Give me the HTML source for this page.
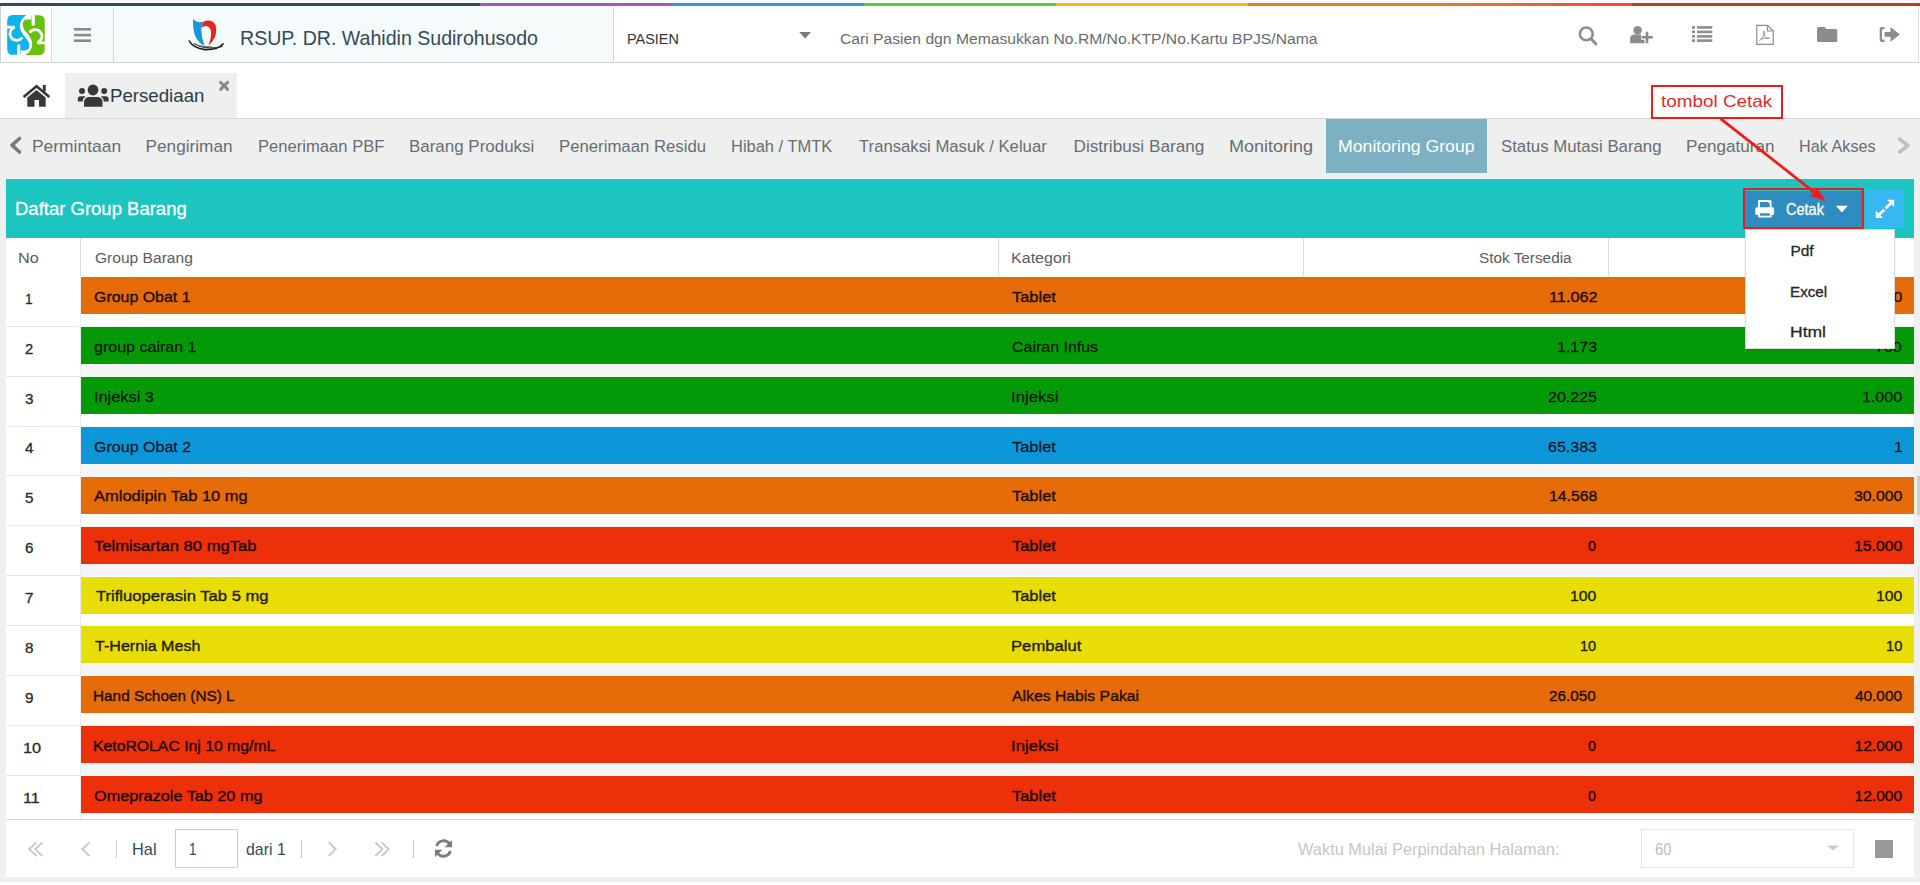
<!DOCTYPE html>
<html><head><meta charset="utf-8"><title>Persediaan - Monitoring Group</title>
<style>html,body{margin:0;padding:0}
body{width:1920px;height:885px;position:relative;overflow:hidden;background:#eef0f0;font-family:'Liberation Sans', sans-serif}
.r{position:absolute}
.tx{position:absolute;white-space:nowrap;transform-origin:0 0}
.ic{position:absolute;left:0;top:0;pointer-events:none}</style></head>
<body>
<div class="r" style="left:0px;top:0px;width:1920px;height:3px;background:#f7f9fa;"></div>
<div class="r" style="left:0;top:3px;width:1920px;height:3px;background:linear-gradient(to right,#34495e 0,#34495e 25%,#9b59b6 25%,#9b59b6 35%,#3498db 35%,#3498db 45%,#62cb31 45%,#62cb31 55%,#ffb606 55%,#ffb606 65%,#e67e22 65%,#e67e22 75%,#e74c3c 85%,#c0392b 85%,#c0392b 100%)"></div>
<div class="r" style="left:0px;top:6px;width:1920px;height:56px;background:#ffffff;"></div>
<div class="r" style="left:1px;top:6px;width:612px;height:56px;background:#f5fafa;"></div>
<div class="r" style="left:1px;top:6px;width:50px;height:56px;background:#ffffff;"></div>
<div class="r" style="left:0px;top:6px;width:1px;height:56px;background:#d0d2d4;"></div>
<div class="r" style="left:51px;top:8px;width:1px;height:54px;background:#d4d8d8;"></div>
<div class="r" style="left:113px;top:8px;width:1px;height:54px;background:#d4d8d8;"></div>
<div class="r" style="left:613px;top:8px;width:1px;height:54px;background:#d0d4d4;"></div>
<div class="r" style="left:1918px;top:6px;width:1px;height:56px;background:#e0e0e0;"></div>
<div class="r" style="left:0px;top:62px;width:1920px;height:1px;background:#cfd2d2;"></div>
<div class="r" style="left:0px;top:63px;width:1920px;height:55px;background:#ffffff;"></div>
<div class="r" style="left:65px;top:73px;width:172px;height:45px;background:#eef0f0;"></div>
<div class="r" style="left:0px;top:118px;width:1920px;height:1px;background:#d4d6d6;"></div>
<div class="r" style="left:0px;top:119px;width:1920px;height:766px;background:#eef0f0;"></div>
<div class="r" style="left:1326px;top:119px;width:161px;height:54px;background:#7db0c1;"></div>
<div class="r" style="left:6px;top:179px;width:1908px;height:59px;background:#1cc5c0;"></div>
<div class="r" style="left:6px;top:238px;width:1908px;height:38px;background:#ffffff;"></div>
<div class="r" style="left:80px;top:238px;width:1px;height:38px;background:#dcdcdc;"></div>
<div class="r" style="left:998px;top:238px;width:1px;height:38px;background:#dcdcdc;"></div>
<div class="r" style="left:1303px;top:238px;width:1px;height:38px;background:#dcdcdc;"></div>
<div class="r" style="left:1608px;top:238px;width:1px;height:38px;background:#dcdcdc;"></div>
<div class="r" style="left:6px;top:276.10px;width:75px;height:49.91px;background:#ffffff"></div>
<div class="r" style="left:81px;top:276.10px;width:1833px;height:49.91px;background:#ffffff"></div>
<div class="r" style="left:80px;top:276.10px;width:1px;height:49.91px;background:#ececec"></div>
<div class="r" style="left:81px;top:277.10px;width:1833px;height:37px;background:#e66c09"></div>
<div class="r" style="left:6px;top:326.01px;width:75px;height:49.91px;background:#ffffff"></div>
<div class="r" style="left:81px;top:326.01px;width:1833px;height:49.91px;background:#f4f5f5"></div>
<div class="r" style="left:6px;top:325.71px;width:75px;height:1px;background:#e6e6e6"></div>
<div class="r" style="left:80px;top:326.01px;width:1px;height:49.91px;background:#ececec"></div>
<div class="r" style="left:81px;top:327.01px;width:1833px;height:37px;background:#049a07"></div>
<div class="r" style="left:6px;top:375.92px;width:75px;height:49.91px;background:#ffffff"></div>
<div class="r" style="left:81px;top:375.92px;width:1833px;height:49.91px;background:#ffffff"></div>
<div class="r" style="left:6px;top:375.62px;width:75px;height:1px;background:#e6e6e6"></div>
<div class="r" style="left:80px;top:375.92px;width:1px;height:49.91px;background:#ececec"></div>
<div class="r" style="left:81px;top:376.92px;width:1833px;height:37px;background:#049a07"></div>
<div class="r" style="left:6px;top:425.83px;width:75px;height:49.91px;background:#ffffff"></div>
<div class="r" style="left:81px;top:425.83px;width:1833px;height:49.91px;background:#f4f5f5"></div>
<div class="r" style="left:6px;top:425.53px;width:75px;height:1px;background:#e6e6e6"></div>
<div class="r" style="left:80px;top:425.83px;width:1px;height:49.91px;background:#ececec"></div>
<div class="r" style="left:81px;top:426.83px;width:1833px;height:37px;background:#0d97d9"></div>
<div class="r" style="left:6px;top:475.74px;width:75px;height:49.91px;background:#ffffff"></div>
<div class="r" style="left:81px;top:475.74px;width:1833px;height:49.91px;background:#ffffff"></div>
<div class="r" style="left:6px;top:475.44px;width:75px;height:1px;background:#e6e6e6"></div>
<div class="r" style="left:80px;top:475.74px;width:1px;height:49.91px;background:#ececec"></div>
<div class="r" style="left:81px;top:476.74px;width:1833px;height:37px;background:#e66c09"></div>
<div class="r" style="left:6px;top:525.65px;width:75px;height:49.91px;background:#ffffff"></div>
<div class="r" style="left:81px;top:525.65px;width:1833px;height:49.91px;background:#f4f5f5"></div>
<div class="r" style="left:6px;top:525.35px;width:75px;height:1px;background:#e6e6e6"></div>
<div class="r" style="left:80px;top:525.65px;width:1px;height:49.91px;background:#ececec"></div>
<div class="r" style="left:81px;top:526.65px;width:1833px;height:37px;background:#eb300a"></div>
<div class="r" style="left:6px;top:575.56px;width:75px;height:49.91px;background:#ffffff"></div>
<div class="r" style="left:81px;top:575.56px;width:1833px;height:49.91px;background:#ffffff"></div>
<div class="r" style="left:6px;top:575.26px;width:75px;height:1px;background:#e6e6e6"></div>
<div class="r" style="left:80px;top:575.56px;width:1px;height:49.91px;background:#ececec"></div>
<div class="r" style="left:81px;top:576.56px;width:1833px;height:37px;background:#e9dd06"></div>
<div class="r" style="left:6px;top:625.47px;width:75px;height:49.91px;background:#ffffff"></div>
<div class="r" style="left:81px;top:625.47px;width:1833px;height:49.91px;background:#f4f5f5"></div>
<div class="r" style="left:6px;top:625.17px;width:75px;height:1px;background:#e6e6e6"></div>
<div class="r" style="left:80px;top:625.47px;width:1px;height:49.91px;background:#ececec"></div>
<div class="r" style="left:81px;top:626.47px;width:1833px;height:37px;background:#e9dd06"></div>
<div class="r" style="left:6px;top:675.38px;width:75px;height:49.91px;background:#ffffff"></div>
<div class="r" style="left:81px;top:675.38px;width:1833px;height:49.91px;background:#ffffff"></div>
<div class="r" style="left:6px;top:675.08px;width:75px;height:1px;background:#e6e6e6"></div>
<div class="r" style="left:80px;top:675.38px;width:1px;height:49.91px;background:#ececec"></div>
<div class="r" style="left:81px;top:676.38px;width:1833px;height:37px;background:#e66c09"></div>
<div class="r" style="left:6px;top:725.29px;width:75px;height:49.91px;background:#ffffff"></div>
<div class="r" style="left:81px;top:725.29px;width:1833px;height:49.91px;background:#f4f5f5"></div>
<div class="r" style="left:6px;top:724.99px;width:75px;height:1px;background:#e6e6e6"></div>
<div class="r" style="left:80px;top:725.29px;width:1px;height:49.91px;background:#ececec"></div>
<div class="r" style="left:81px;top:726.29px;width:1833px;height:37px;background:#eb300a"></div>
<div class="r" style="left:6px;top:775.20px;width:75px;height:49.91px;background:#ffffff"></div>
<div class="r" style="left:81px;top:775.20px;width:1833px;height:49.91px;background:#ffffff"></div>
<div class="r" style="left:6px;top:774.90px;width:75px;height:1px;background:#e6e6e6"></div>
<div class="r" style="left:80px;top:775.20px;width:1px;height:49.91px;background:#ececec"></div>
<div class="r" style="left:81px;top:776.20px;width:1833px;height:37px;background:#eb300a"></div>
<div class="r" style="left:1917px;top:476px;width:3px;height:39px;background:#cdcdcd;"></div>
<div class="r" style="left:1918px;top:567px;width:1px;height:48px;background:#dddddd;"></div>
<div class="r" style="left:6px;top:819px;width:1908px;height:1px;background:#d8d8d8;"></div>
<div class="r" style="left:6px;top:820px;width:1908px;height:57px;background:#ffffff;"></div>
<div class="r" style="left:0px;top:877px;width:1920px;height:5px;background:#eef0f0;"></div>
<div class="r" style="left:0px;top:882px;width:1920px;height:3px;background:#fcfdfd;"></div>
<div class="r" style="left:175px;top:829px;width:63px;height:39px;background:#ffffff;border:1px solid #cfcfcf;box-sizing:border-box;"></div>
<div class="r" style="left:1641px;top:829px;width:213px;height:39px;background:#ffffff;border:1px solid #e6e6e6;box-sizing:border-box;"></div>
<div class="r" style="left:1875px;top:840px;width:18px;height:18px;background:#999999;"></div>
<div class="r" style="left:116px;top:840px;width:1px;height:18px;background:#cccccc;"></div>
<div class="r" style="left:301px;top:840px;width:1px;height:18px;background:#cccccc;"></div>
<div class="r" style="left:413px;top:840px;width:1px;height:18px;background:#cccccc;"></div>
<div class="r" style="left:1744px;top:190.5px;width:118px;height:36.099999999999994px;background:#2f8cc0;"></div>
<div class="r" style="left:1865px;top:189px;width:39px;height:39px;background:#37b8f2;"></div>
<div class="r" style="left:1745px;top:229px;width:150px;height:120px;background:#ffffff;border:1px solid rgba(0,0,0,0.15);box-sizing:border-box;box-shadow:0 1px 2px rgba(0,0,0,0.08);z-index:3;"></div>
<div class="r" style="left:1651px;top:85px;width:132px;height:34px;background:#ffffff;border:2.5px solid #f01a1a;box-sizing:border-box;z-index:5;"></div>
<div class="r" style="left:1742.5px;top:188.2px;width:121.29999999999995px;height:40.60000000000002px;background:transparent;border:2.6px solid #f01a1a;box-sizing:border-box;z-index:5;"></div>
<svg class="ic" width="1920" height="885" viewBox="0 0 1920 885" style="z-index:2"><g><path d="M26.5,14.9 L12.5,14.9 Q7.2,14.9 7.2,21 L7.2,48.5 Q7.2,54.8 12.5,54.8 L20.6,54.8 L20.6,50.4 L24.5,50.4 Q29.2,50.4 29.2,45.5 Q29.2,41.5 25.5,37.5 Q20.3,32 19.7,26.5 Q19.7,19 26.5,14.9 Z" fill="#0db3ec"/><path d="M5.5,27.2 L14.8,27.2 A6.7,6.7 0 1 0 22.3,37.3" stroke="#ffffff" stroke-width="2.7" fill="none"/><path d="M18.7,45.8 L18.7,57" stroke="#ffffff" stroke-width="3.2" stroke-linecap="round"/></g>
<g transform="rotate(180 25.95 35)"><path d="M26.5,14.9 L12.5,14.9 Q7.2,14.9 7.2,21 L7.2,48.5 Q7.2,54.8 12.5,54.8 L20.6,54.8 L20.6,50.4 L24.5,50.4 Q29.2,50.4 29.2,45.5 Q29.2,41.5 25.5,37.5 Q20.3,32 19.7,26.5 Q19.7,19 26.5,14.9 Z" fill="#66c30c"/><path d="M5.5,27.2 L14.8,27.2 A6.7,6.7 0 1 0 22.3,37.3" stroke="#ffffff" stroke-width="2.7" fill="none"/><path d="M18.7,45.8 L18.7,57" stroke="#ffffff" stroke-width="3.2" stroke-linecap="round"/></g>
<rect x="74" y="28" width="17" height="2.6" fill="#8a8a8a"/>
<rect x="74" y="33.8" width="17" height="2.6" fill="#8a8a8a"/>
<rect x="74" y="39.4" width="17" height="2.6" fill="#8a8a8a"/>
<path d="M193,19 Q195.5,22.2 199,22.2 Q202,22.2 204.8,21 Q201.3,24.5 201.3,30.5 Q201.5,38.5 204.6,46 Q197.5,42.5 194.6,34.5 Q192.6,27.5 193,19 Z" fill="#1a94d6"/>
      <path d="M204.8,21 Q212,19.2 215.3,24.5 Q217.3,30 215,37 Q212.6,42.2 208.4,45.3 Q211.2,38.5 211.2,32.8 Q210.8,27.6 207.2,26.1 Q204.2,25.4 201.8,27.5 Q202.6,23 204.8,21 Z" fill="#e8231e"/>
      <path d="M189,40.5 Q192.5,48 205,49.6 Q218,50 223.5,43.5" stroke="#1e1e1e" stroke-width="1.7" fill="none"/>
      <path d="M194,43.5 Q200,47.6 210,47.8 Q219,47.8 222.5,46.2" stroke="#333" stroke-width="1.2" fill="none"/>
      <path d="M196.5,45.2 Q204,47.2 212,46.8" stroke="#666" stroke-width="0.9" fill="none"/>
<path d="M799.2,31.9 L811,31.9 L805.1,38.4 Z" fill="#7a7a7a"/>
<circle cx="1586.3" cy="33.9" r="6.4" stroke="#8c8c8c" stroke-width="2.6" fill="none"/>
<path d="M1591,38.8 L1595.8,43.8" stroke="#8c8c8c" stroke-width="3" stroke-linecap="round"/>
<circle cx="1637.6" cy="30.3" r="4.3" fill="#8c8c8c"/>
<path d="M1630,43.3 L1630,39 Q1630,34.5 1634.5,34.5 L1641,34.5 Q1644,34.5 1645,37 L1645,43.3 Z" fill="#8c8c8c"/>
<path d="M1641,37.3 L1653,37.3 M1647,31.4 L1647,43.3" stroke="#ffffff" stroke-width="5"/>
<path d="M1641.5,37.3 L1652.8,37.3 M1647,31.8 L1647,43.3" stroke="#8c8c8c" stroke-width="2.6"/>
<rect x="1692" y="26.1" width="3" height="2.6" fill="#8c8c8c"/><rect x="1697" y="26.1" width="15.3" height="2.6" fill="#8c8c8c"/>
<rect x="1692" y="30.6" width="3" height="2.6" fill="#8c8c8c"/><rect x="1697" y="30.6" width="15.3" height="2.6" fill="#8c8c8c"/>
<rect x="1692" y="35.1" width="3" height="2.6" fill="#8c8c8c"/><rect x="1697" y="35.1" width="15.3" height="2.6" fill="#8c8c8c"/>
<rect x="1692" y="39.3" width="3" height="2.6" fill="#8c8c8c"/><rect x="1697" y="39.3" width="15.3" height="2.6" fill="#8c8c8c"/>
<path d="M1756.8,25.3 L1767.5,25.3 L1773.2,31 L1773.2,44.3 L1756.8,44.3 Z" stroke="#8c8c8c" stroke-width="1.2" fill="none"/>
<path d="M1767.5,25.3 L1767.5,31 L1773.2,31" stroke="#8c8c8c" stroke-width="1.2" fill="none"/>
<path d="M1759.5,41 L1764,35 Q1765,31 1763.8,31 Q1762.7,31 1764.5,36 L1766.5,38.5 Q1770,38.5 1769.5,38 Q1766,37.5 1761.5,39" stroke="#8c8c8c" stroke-width="0.9" fill="none"/>
<path d="M1817,28.5 Q1817,26.9 1818.5,26.9 L1824.5,26.9 L1826.5,28.9 L1835.8,28.9 Q1837.3,28.9 1837.3,30.4 L1837.3,40.4 Q1837.3,41.9 1835.8,41.9 L1818.5,41.9 Q1817,41.9 1817,40.4 Z" fill="#8c8c8c"/>
<path d="M1884.5,26.9 L1881.5,26.9 Q1879.7,26.9 1879.7,28.7 L1879.7,40.1 Q1879.7,41.9 1881.5,41.9 L1884.5,41.9 L1884.5,39.6 L1882,39.6 L1882,29.2 L1884.5,29.2 Z" fill="#8c8c8c"/>
<path d="M1884.5,32 L1890.5,32 L1890.5,26.9 L1899.8,34.4 L1890.5,41.9 L1890.5,36.8 L1884.5,36.8 Z" fill="#8c8c8c"/>
<path d="M23.6,97 L36.5,86.3 L49.4,97" stroke="#383838" stroke-width="2.6" fill="none" stroke-linejoin="miter"/>
<rect x="42.8" y="85" width="3" height="6.5" fill="#383838"/>
<path d="M27.3,97.6 L36.5,90 L45.7,97.6 L45.7,106.7 L39,106.7 L39,100 L34.5,100 L34.5,106.7 L27.3,106.7 Z" fill="#383838"/>
<circle cx="93" cy="90" r="5.4" fill="#383838"/>
<path d="M84,106.7 L84,102.5 Q84,97 89.5,97 L97,97 Q102.5,97 102.5,102.5 L102.5,106.7 Z" fill="#383838"/>
<circle cx="82" cy="91" r="3" fill="#383838"/>
<circle cx="104.2" cy="91" r="3" fill="#383838"/>
<path d="M77.8,101.6 L77.8,99 Q77.8,96.2 80.8,96.2 L85.6,96.2 Q83,98 82.6,101.6 Z" fill="#383838"/>
<path d="M108.6,101.6 L108.6,99 Q108.6,96.2 105.6,96.2 L100.8,96.2 Q103.4,98 103.8,101.6 Z" fill="#383838"/>
<path d="M220.6,82.4 L227.6,89.4 M227.6,82.4 L220.6,89.4" stroke="#8a8a8a" stroke-width="3" stroke-linecap="round"/>
<path d="M19.5,138.5 L12,145.2 L19.5,152" stroke="#7a7a7a" stroke-width="3.6" fill="none" stroke-linecap="round" stroke-linejoin="round"/>
<path d="M1899.5,139 L1908,145.5 L1899.5,152" stroke="#c0c0c0" stroke-width="3.6" fill="none" stroke-linecap="round" stroke-linejoin="round"/>
<path d="M1759,208 L1759,201 L1768.2,201 L1770.6,203.4 L1770.6,208" stroke="#ffffff" stroke-width="1.8" fill="none"/>
<path d="M1767.5,200.2 L1771.4,200.2 L1771.4,204.1 Z" fill="#ffffff"/>
<rect x="1755.3" y="207.2" width="18.8" height="7.9" rx="1.6" fill="#ffffff"/>
<rect x="1758.2" y="211.5" width="13.4" height="6.1" rx="0.8" fill="#ffffff"/>
<rect x="1760" y="213.3" width="9.8" height="2.4" fill="#2f8cc0"/>
<path d="M1835.8,205.8 L1847.9,205.8 L1841.85,212.5 Z" fill="#ffffff"/>
<path d="M1885.6,208.4 L1891.2,202.8" stroke="#ffffff" stroke-width="2.7"/>
<path d="M1887,199.8 L1894.2,199.8 L1894.2,207 Z" fill="#ffffff"/>
<path d="M1878.8,215 L1884.3,209.5" stroke="#ffffff" stroke-width="2.7"/>
<path d="M1875.8,210.7 L1875.8,217.9 L1883,217.9 Z" fill="#ffffff"/>
<path d="M36.5,842.4 L29.2,849.1 L36.5,856 M42.5,842.4 L35.2,849.1 L42.5,856" stroke="#c8c8c8" stroke-width="1.9" fill="none"/>
<path d="M89.6,842.4 L82.3,849.1 L89.6,856" stroke="#c8c8c8" stroke-width="1.9" fill="none"/>
<path d="M328.8,842.4 L335.6,849.1 L328.8,856" stroke="#c8c8c8" stroke-width="1.9" fill="none"/>
<path d="M375.4,842.4 L382.3,849.1 L375.4,856 M381.7,842.4 L388.6,849.1 L381.7,856" stroke="#c8c8c8" stroke-width="1.9" fill="none"/>
<path d="M436.6,846 A7.3,7.3 0 0 1 449.5,843.8" stroke="#7b7b7b" stroke-width="2.8" fill="none"/>
<path d="M452,840 L452,847.3 L444.7,847.3 Z" fill="#7b7b7b"/>
<path d="M450.4,851 A7.3,7.3 0 0 1 437.5,853.2" stroke="#7b7b7b" stroke-width="2.8" fill="none"/>
<path d="M435,857 L435,849.7 L442.3,849.7 Z" fill="#7b7b7b"/>
<path d="M1826.7,845.5 L1839,845.5 L1832.85,850.5 Z" fill="#cccccc"/></svg>
<div class="tx" style="left:239.84px;top:28px;font-size:20.3px;line-height:20.3px;color:#34495e;transform:scaleX(0.9646);z-index:2;">RSUP. DR. Wahidin Sudirohusodo</div>
<div class="tx" style="left:626.83px;top:32px;font-size:14.9px;line-height:14.9px;color:#333333;transform:scaleX(0.9699);z-index:2;">PASIEN</div>
<div class="tx" style="left:839.80px;top:32px;font-size:14.9px;line-height:14.9px;color:#6a6c6f;transform:scaleX(1.0528);z-index:2;">Cari Pasien dgn Memasukkan No.RM/No.KTP/No.Kartu BPJS/Nama</div>
<div class="tx" style="left:110.02px;top:86px;font-size:19.1px;line-height:19.1px;color:#2e3a46;transform:scaleX(0.9771);z-index:2;">Persediaan</div>
<div class="tx" style="left:31.79px;top:138px;font-size:17.2px;line-height:17.2px;color:#6a6c6f;transform:scaleX(1.0135);z-index:2;">Permintaan</div>
<div class="tx" style="left:145.60px;top:138px;font-size:17.2px;line-height:17.2px;color:#6a6c6f;z-index:2;">Pengiriman</div>
<div class="tx" style="left:258.03px;top:138px;font-size:17.2px;line-height:17.2px;color:#6a6c6f;transform:scaleX(0.9661);z-index:2;">Penerimaan PBF</div>
<div class="tx" style="left:408.51px;top:138px;font-size:17.2px;line-height:17.2px;color:#6a6c6f;transform:scaleX(0.9860);z-index:2;">Barang Produksi</div>
<div class="tx" style="left:558.53px;top:138px;font-size:17.2px;line-height:17.2px;color:#6a6c6f;transform:scaleX(0.9739);z-index:2;">Penerimaan Residu</div>
<div class="tx" style="left:731.04px;top:138px;font-size:17.2px;line-height:17.2px;color:#6a6c6f;transform:scaleX(0.9569);z-index:2;">Hibah / TMTK</div>
<div class="tx" style="left:859.20px;top:138px;font-size:17.2px;line-height:17.2px;color:#6a6c6f;transform:scaleX(0.9714);z-index:2;">Transaksi Masuk / Keluar</div>
<div class="tx" style="left:1073.50px;top:138px;font-size:17.2px;line-height:17.2px;color:#6a6c6f;z-index:2;">Distribusi Barang</div>
<div class="tx" style="left:1229.45px;top:138px;font-size:17.2px;line-height:17.2px;color:#6a6c6f;transform:scaleX(1.0484);z-index:2;">Monitoring</div>
<div class="tx" style="left:1338.47px;top:138px;font-size:17.2px;line-height:17.2px;color:#ffffff;transform:scaleX(1.0287);z-index:2;">Monitoring Group</div>
<div class="tx" style="left:1500.60px;top:138px;font-size:17.2px;line-height:17.2px;color:#6a6c6f;transform:scaleX(0.9770);z-index:2;">Status Mutasi Barang</div>
<div class="tx" style="left:1685.90px;top:138px;font-size:17.2px;line-height:17.2px;color:#6a6c6f;transform:scaleX(0.9952);z-index:2;">Pengaturan</div>
<div class="tx" style="left:1799.36px;top:138px;font-size:17.2px;line-height:17.2px;color:#6a6c6f;transform:scaleX(0.9447);z-index:2;">Hak Akses</div>
<div class="tx" style="left:14.77px;top:200px;font-size:18.9px;line-height:18.9px;color:#ffffff;-webkit-text-stroke:0.3px currentColor;transform:scaleX(0.9793);z-index:2;">Daftar Group Barang</div>
<div class="tx" style="left:1785.70px;top:202px;font-size:15.7px;line-height:15.7px;color:#ffffff;-webkit-text-stroke:0.3px currentColor;transform:scaleX(0.9250);z-index:2;">Cetak</div>
<div class="tx" style="left:18.21px;top:251px;font-size:14.9px;line-height:14.9px;color:#5a5c5f;transform:scaleX(1.0871);z-index:2;">No</div>
<div class="tx" style="left:94.50px;top:251px;font-size:14.9px;line-height:14.9px;color:#5a5c5f;transform:scaleX(1.0455);z-index:2;">Group Barang</div>
<div class="tx" style="left:1010.52px;top:251px;font-size:14.9px;line-height:14.9px;color:#5a5c5f;transform:scaleX(1.0784);z-index:2;">Kategori</div>
<div class="tx" style="left:1479.00px;top:251px;font-size:14.9px;line-height:14.9px;color:#5a5c5f;transform:scaleX(1.0293);z-index:2;">Stok Tersedia</div>
<div class="tx" style="left:94.40px;top:289px;font-size:15.5px;line-height:15.5px;color:rgba(0,0,0,0.82);-webkit-text-stroke:0.45px currentColor;transform:scaleX(1.0279);z-index:2;">Group Obat 1</div>
<div class="tx" style="left:1011.70px;top:289px;font-size:15.5px;line-height:15.5px;color:rgba(0,0,0,0.82);-webkit-text-stroke:0.45px currentColor;transform:scaleX(1.0605);z-index:2;">Tablet</div>
<div class="tx" style="left:1548.55px;top:289px;font-size:15.5px;line-height:15.5px;color:rgba(0,0,0,0.82);-webkit-text-stroke:0.45px currentColor;transform:scaleX(1.0507);z-index:2;">11.062</div>
<div class="tx" style="left:1853.64px;top:289px;font-size:15.5px;line-height:15.5px;color:rgba(0,0,0,0.82);-webkit-text-stroke:0.45px currentColor;transform:scaleX(1.0182);z-index:2;">12.000</div>
<div class="tx" style="left:25.09px;top:291px;font-size:15px;line-height:15px;color:#2a2a2a;-webkit-text-stroke:0.3px currentColor;transform:scaleX(0.9143);z-index:2;">1</div>
<div class="tx" style="left:94.40px;top:339px;font-size:15.5px;line-height:15.5px;color:rgba(0,0,0,0.82);-webkit-text-stroke:0.3px currentColor;transform:scaleX(1.0348);z-index:2;">group cairan 1</div>
<div class="tx" style="left:1011.70px;top:339px;font-size:15.5px;line-height:15.5px;color:rgba(0,0,0,0.82);-webkit-text-stroke:0.3px currentColor;transform:scaleX(1.0296);z-index:2;">Cairan Infus</div>
<div class="tx" style="left:1557.07px;top:339px;font-size:15.5px;line-height:15.5px;color:rgba(0,0,0,0.82);-webkit-text-stroke:0.3px currentColor;transform:scaleX(1.0330);z-index:2;">1.173</div>
<div class="tx" style="left:1875.19px;top:339px;font-size:15.5px;line-height:15.5px;color:rgba(0,0,0,0.82);-webkit-text-stroke:0.3px currentColor;transform:scaleX(1.0330);z-index:2;">700</div>
<div class="tx" style="left:25.30px;top:341px;font-size:15px;line-height:15px;color:#2a2a2a;-webkit-text-stroke:0.3px currentColor;transform:scaleX(0.9875);z-index:2;">2</div>
<div class="tx" style="left:93.55px;top:389px;font-size:15.5px;line-height:15.5px;color:rgba(0,0,0,0.82);-webkit-text-stroke:0.3px currentColor;transform:scaleX(1.0536);z-index:2;">Injeksi 3</div>
<div class="tx" style="left:1010.62px;top:389px;font-size:15.5px;line-height:15.5px;color:rgba(0,0,0,0.82);-webkit-text-stroke:0.3px currentColor;transform:scaleX(1.0802);z-index:2;">Injeksi</div>
<div class="tx" style="left:1548.17px;top:389px;font-size:15.5px;line-height:15.5px;color:rgba(0,0,0,0.82);-webkit-text-stroke:0.3px currentColor;transform:scaleX(1.0330);z-index:2;">20.225</div>
<div class="tx" style="left:1861.84px;top:389px;font-size:15.5px;line-height:15.5px;color:rgba(0,0,0,0.82);-webkit-text-stroke:0.3px currentColor;transform:scaleX(1.0330);z-index:2;">1.000</div>
<div class="tx" style="left:25.20px;top:391px;font-size:15px;line-height:15px;color:#2a2a2a;-webkit-text-stroke:0.3px currentColor;transform:scaleX(1.0164);z-index:2;">3</div>
<div class="tx" style="left:94.40px;top:439px;font-size:15.5px;line-height:15.5px;color:rgba(0,0,0,0.82);-webkit-text-stroke:0.3px currentColor;transform:scaleX(1.0343);z-index:2;">Group Obat 2</div>
<div class="tx" style="left:1011.70px;top:439px;font-size:15.5px;line-height:15.5px;color:rgba(0,0,0,0.82);-webkit-text-stroke:0.3px currentColor;transform:scaleX(1.0605);z-index:2;">Tablet</div>
<div class="tx" style="left:1548.17px;top:439px;font-size:15.5px;line-height:15.5px;color:rgba(0,0,0,0.82);-webkit-text-stroke:0.3px currentColor;transform:scaleX(1.0330);z-index:2;">65.383</div>
<div class="tx" style="left:1894.04px;top:439px;font-size:15.5px;line-height:15.5px;color:rgba(0,0,0,0.82);-webkit-text-stroke:0.3px currentColor;transform:scaleX(1.0330);z-index:2;">1</div>
<div class="tx" style="left:25.20px;top:440px;font-size:15px;line-height:15px;color:#2a2a2a;-webkit-text-stroke:0.3px currentColor;transform:scaleX(1.0164);z-index:2;">4</div>
<div class="tx" style="left:94.40px;top:488px;font-size:15.5px;line-height:15.5px;color:rgba(0,0,0,0.82);-webkit-text-stroke:0.45px currentColor;transform:scaleX(1.0644);z-index:2;">Amlodipin Tab 10 mg</div>
<div class="tx" style="left:1011.70px;top:488px;font-size:15.5px;line-height:15.5px;color:rgba(0,0,0,0.82);-webkit-text-stroke:0.45px currentColor;transform:scaleX(1.0605);z-index:2;">Tablet</div>
<div class="tx" style="left:1548.86px;top:488px;font-size:15.5px;line-height:15.5px;color:rgba(0,0,0,0.82);-webkit-text-stroke:0.45px currentColor;transform:scaleX(1.0182);z-index:2;">14.568</div>
<div class="tx" style="left:1853.64px;top:488px;font-size:15.5px;line-height:15.5px;color:rgba(0,0,0,0.82);-webkit-text-stroke:0.45px currentColor;transform:scaleX(1.0182);z-index:2;">30.000</div>
<div class="tx" style="left:25.20px;top:490px;font-size:15px;line-height:15px;color:#2a2a2a;-webkit-text-stroke:0.3px currentColor;transform:scaleX(1.0164);z-index:2;">5</div>
<div class="tx" style="left:94.40px;top:538px;font-size:15.5px;line-height:15.5px;color:rgba(0,0,0,0.82);-webkit-text-stroke:0.45px currentColor;transform:scaleX(1.0722);z-index:2;">Telmisartan 80 mgTab</div>
<div class="tx" style="left:1011.70px;top:538px;font-size:15.5px;line-height:15.5px;color:rgba(0,0,0,0.82);-webkit-text-stroke:0.45px currentColor;transform:scaleX(1.0605);z-index:2;">Tablet</div>
<div class="tx" style="left:1588.20px;top:538px;font-size:15.5px;line-height:15.5px;color:rgba(0,0,0,0.82);-webkit-text-stroke:0.45px currentColor;transform:scaleX(0.9222);z-index:2;">0</div>
<div class="tx" style="left:1853.64px;top:538px;font-size:15.5px;line-height:15.5px;color:rgba(0,0,0,0.82);-webkit-text-stroke:0.45px currentColor;transform:scaleX(1.0182);z-index:2;">15.000</div>
<div class="tx" style="left:25.20px;top:540px;font-size:15px;line-height:15px;color:#2a2a2a;-webkit-text-stroke:0.3px currentColor;transform:scaleX(1.0164);z-index:2;">6</div>
<div class="tx" style="left:95.60px;top:588px;font-size:15.5px;line-height:15.5px;color:rgba(0,0,0,0.82);-webkit-text-stroke:0.45px currentColor;transform:scaleX(1.0711);z-index:2;">Trifluoperasin Tab 5 mg</div>
<div class="tx" style="left:1011.70px;top:588px;font-size:15.5px;line-height:15.5px;color:rgba(0,0,0,0.82);-webkit-text-stroke:0.45px currentColor;transform:scaleX(1.0605);z-index:2;">Tablet</div>
<div class="tx" style="left:1569.78px;top:588px;font-size:15.5px;line-height:15.5px;color:rgba(0,0,0,0.82);-webkit-text-stroke:0.45px currentColor;transform:scaleX(1.0182);z-index:2;">100</div>
<div class="tx" style="left:1875.58px;top:588px;font-size:15.5px;line-height:15.5px;color:rgba(0,0,0,0.82);-webkit-text-stroke:0.45px currentColor;transform:scaleX(1.0182);z-index:2;">100</div>
<div class="tx" style="left:25.20px;top:590px;font-size:15px;line-height:15px;color:#2a2a2a;-webkit-text-stroke:0.3px currentColor;transform:scaleX(1.0164);z-index:2;">7</div>
<div class="tx" style="left:95.40px;top:638px;font-size:15.5px;line-height:15.5px;color:rgba(0,0,0,0.82);-webkit-text-stroke:0.45px currentColor;transform:scaleX(1.0374);z-index:2;">T-Hernia Mesh</div>
<div class="tx" style="left:1010.62px;top:638px;font-size:15.5px;line-height:15.5px;color:rgba(0,0,0,0.82);-webkit-text-stroke:0.45px currentColor;transform:scaleX(1.0756);z-index:2;">Pembalut</div>
<div class="tx" style="left:1580.07px;top:638px;font-size:15.5px;line-height:15.5px;color:rgba(0,0,0,0.82);-webkit-text-stroke:0.45px currentColor;transform:scaleX(0.9326);z-index:2;">10</div>
<div class="tx" style="left:1885.66px;top:638px;font-size:15.5px;line-height:15.5px;color:rgba(0,0,0,0.82);-webkit-text-stroke:0.45px currentColor;transform:scaleX(0.9446);z-index:2;">10</div>
<div class="tx" style="left:25.20px;top:640px;font-size:15px;line-height:15px;color:#2a2a2a;-webkit-text-stroke:0.3px currentColor;transform:scaleX(1.0164);z-index:2;">8</div>
<div class="tx" style="left:93.41px;top:688px;font-size:15.5px;line-height:15.5px;color:rgba(0,0,0,0.82);-webkit-text-stroke:0.45px currentColor;transform:scaleX(0.9902);z-index:2;">Hand Schoen (NS) L</div>
<div class="tx" style="left:1011.70px;top:688px;font-size:15.5px;line-height:15.5px;color:rgba(0,0,0,0.82);-webkit-text-stroke:0.45px currentColor;transform:scaleX(1.0171);z-index:2;">Alkes Habis Pakai</div>
<div class="tx" style="left:1549.40px;top:688px;font-size:15.5px;line-height:15.5px;color:rgba(0,0,0,0.82);-webkit-text-stroke:0.45px currentColor;transform:scaleX(0.9856);z-index:2;">26.050</div>
<div class="tx" style="left:1854.90px;top:688px;font-size:15.5px;line-height:15.5px;color:rgba(0,0,0,0.82);-webkit-text-stroke:0.45px currentColor;transform:scaleX(0.9919);z-index:2;">40.000</div>
<div class="tx" style="left:25.20px;top:690px;font-size:15px;line-height:15px;color:#2a2a2a;-webkit-text-stroke:0.3px currentColor;transform:scaleX(1.0164);z-index:2;">9</div>
<div class="tx" style="left:93.38px;top:738px;font-size:15.5px;line-height:15.5px;color:rgba(0,0,0,0.82);-webkit-text-stroke:0.45px currentColor;transform:scaleX(1.0175);z-index:2;">KetoROLAC Inj 10 mg/mL</div>
<div class="tx" style="left:1010.62px;top:738px;font-size:15.5px;line-height:15.5px;color:rgba(0,0,0,0.82);-webkit-text-stroke:0.45px currentColor;transform:scaleX(1.0802);z-index:2;">Injeksi</div>
<div class="tx" style="left:1588.20px;top:738px;font-size:15.5px;line-height:15.5px;color:rgba(0,0,0,0.82);-webkit-text-stroke:0.45px currentColor;transform:scaleX(0.9222);z-index:2;">0</div>
<div class="tx" style="left:1854.60px;top:738px;font-size:15.5px;line-height:15.5px;color:rgba(0,0,0,0.82);-webkit-text-stroke:0.45px currentColor;z-index:2;">12.000</div>
<div class="tx" style="left:22.91px;top:740px;font-size:15px;line-height:15px;color:#2a2a2a;-webkit-text-stroke:0.3px currentColor;transform:scaleX(1.0885);z-index:2;">10</div>
<div class="tx" style="left:94.40px;top:788px;font-size:15.5px;line-height:15.5px;color:rgba(0,0,0,0.82);-webkit-text-stroke:0.45px currentColor;transform:scaleX(1.0474);z-index:2;">Omeprazole Tab 20 mg</div>
<div class="tx" style="left:1011.70px;top:788px;font-size:15.5px;line-height:15.5px;color:rgba(0,0,0,0.82);-webkit-text-stroke:0.45px currentColor;transform:scaleX(1.0605);z-index:2;">Tablet</div>
<div class="tx" style="left:1588.20px;top:788px;font-size:15.5px;line-height:15.5px;color:rgba(0,0,0,0.82);-webkit-text-stroke:0.45px currentColor;transform:scaleX(0.9222);z-index:2;">0</div>
<div class="tx" style="left:1854.60px;top:788px;font-size:15.5px;line-height:15.5px;color:rgba(0,0,0,0.82);-webkit-text-stroke:0.45px currentColor;z-index:2;">12.000</div>
<div class="tx" style="left:22.92px;top:790px;font-size:15px;line-height:15px;color:#2a2a2a;-webkit-text-stroke:0.3px currentColor;transform:scaleX(1.0753);z-index:2;">11</div>
<div class="tx" style="left:1790.40px;top:243px;font-size:15.5px;line-height:15.5px;color:#262626;-webkit-text-stroke:0.3px currentColor;z-index:4;">Pdf</div>
<div class="tx" style="left:1790.42px;top:284px;font-size:15.5px;line-height:15.5px;color:#262626;-webkit-text-stroke:0.3px currentColor;transform:scaleX(0.9819);z-index:4;">Excel</div>
<div class="tx" style="left:1790.27px;top:324px;font-size:15.5px;line-height:15.5px;color:#262626;-webkit-text-stroke:0.3px currentColor;transform:scaleX(1.1279);z-index:4;">Html</div>
<div class="tx" style="left:1660.70px;top:94px;font-size:15.6px;line-height:15.6px;color:#e62a2a;transform:scaleX(1.2110);z-index:6;">tombol Cetak</div>
<div class="tx" style="left:131.96px;top:842px;font-size:15.7px;line-height:15.7px;color:#34495e;transform:scaleX(1.0429);z-index:2;">Hal</div>
<div class="tx" style="left:188.64px;top:842px;font-size:15.7px;line-height:15.7px;color:#34495e;transform:scaleX(0.8571);z-index:2;">1</div>
<div class="tx" style="left:245.50px;top:842px;font-size:15.7px;line-height:15.7px;color:#34495e;transform:scaleX(1.0125);z-index:2;">dari 1</div>
<div class="tx" style="left:1297.90px;top:842px;font-size:15.7px;line-height:15.7px;color:#c6c6c6;transform:scaleX(1.0438);z-index:2;">Waktu Mulai Perpindahan Halaman:</div>
<div class="tx" style="left:1655.00px;top:842px;font-size:15.7px;line-height:15.7px;color:#bdbdbd;transform:scaleX(0.9422);z-index:2;">60</div>
<svg class="ic" width="1920" height="885" viewBox="0 0 1920 885" style="z-index:6"><path d="M1720.5,118.6 L1815,192.8" stroke="#f01a1a" stroke-width="2.8"/>
<path d="M1825.8,201.3 L1810.4,196.1 L1817.2,187.5 Z" fill="#f01a1a"/></svg>
</body></html>
